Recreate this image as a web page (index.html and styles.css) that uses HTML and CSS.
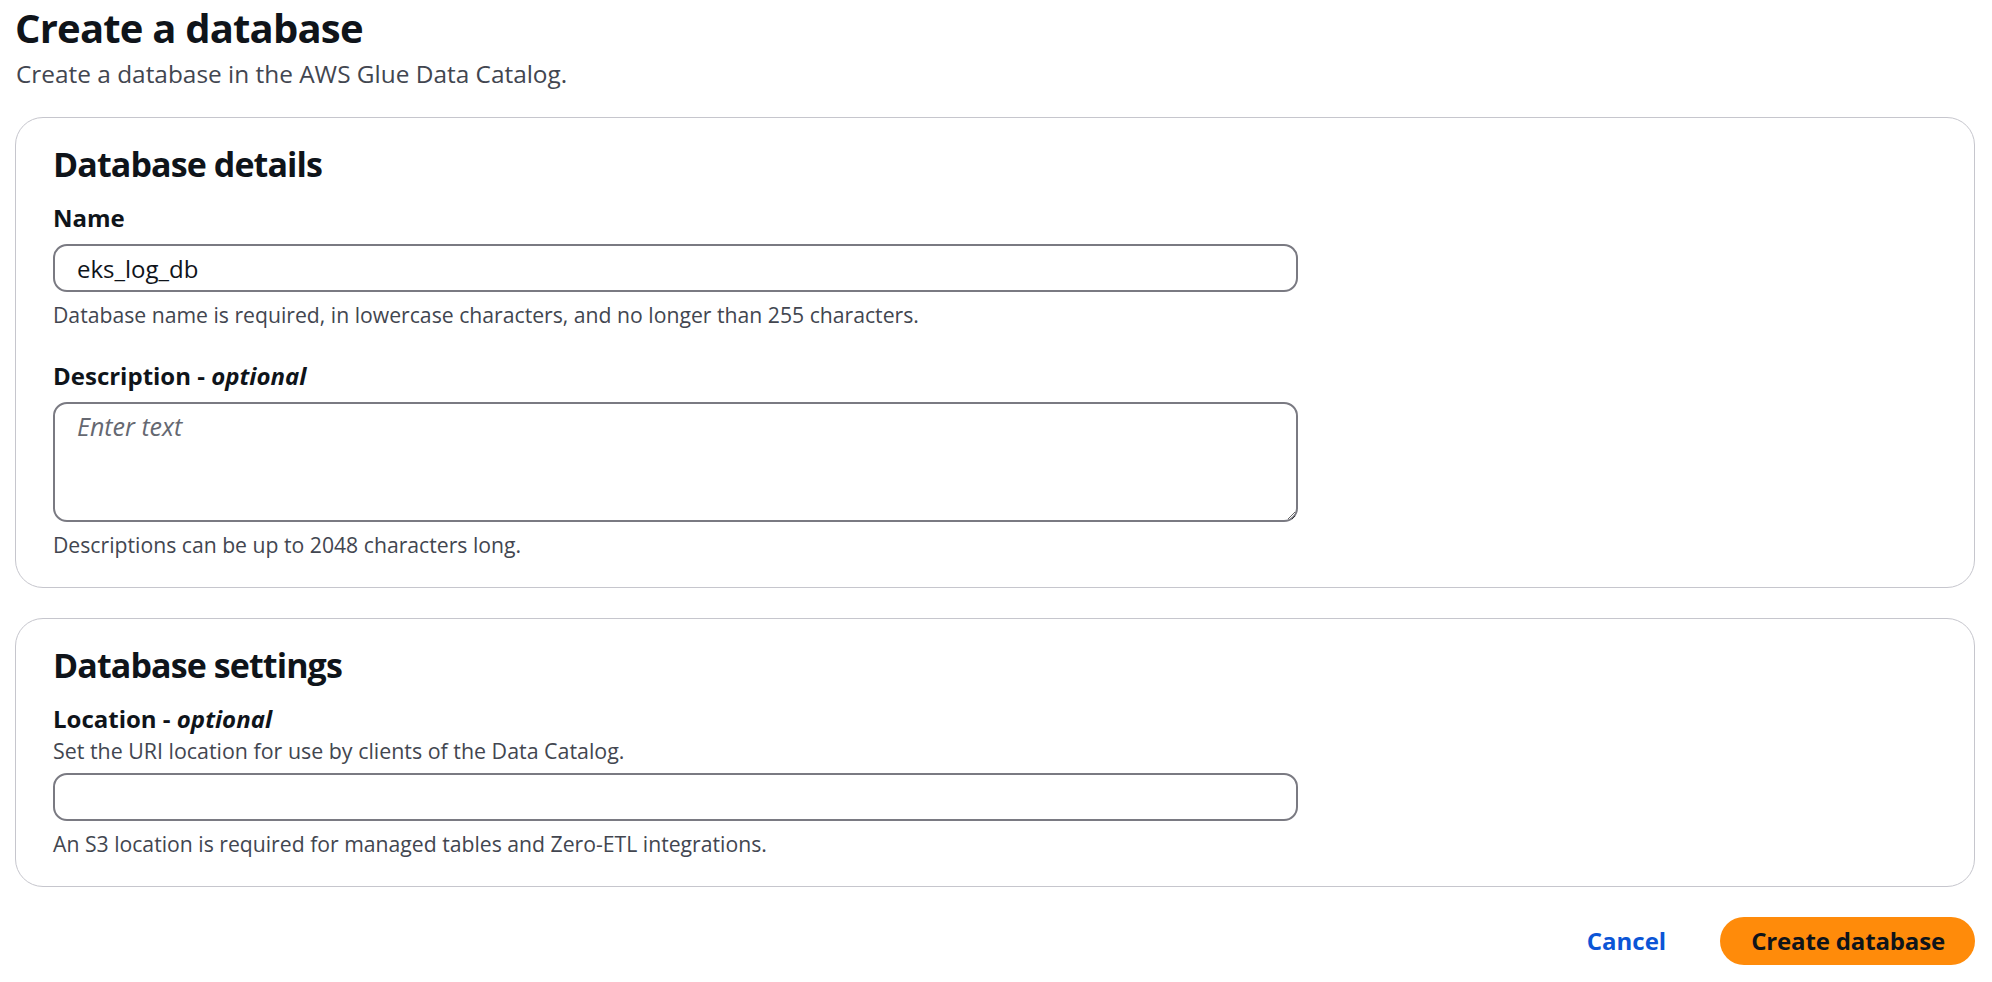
FILE: index.html
```html
<!DOCTYPE html>
<html lang="en">
<head>
<meta charset="utf-8">
<title>Create a database</title>
<link rel="stylesheet" href="styles.css">
</head>
<body>
<main class="page">
  <header class="page-header">
    <h1 class="page-title">Create a database</h1>
    <p class="page-desc">Create a database in the AWS Glue Data Catalog.</p>
  </header>

  <section class="card card-details">
    <h2 class="card-title">Database details</h2>
    <div class="field">
      <label class="field-label" for="db-name">Name</label>
      <input class="text-input" id="db-name" type="text" value="eks_log_db">
      <p class="field-hint">Database name is required, in lowercase characters, and no longer than 255 characters.</p>
    </div>
    <div class="field field-spaced">
      <label class="field-label" for="db-desc">Description - <i>optional</i></label>
      <textarea class="text-area" id="db-desc" placeholder="Enter text"></textarea>
      <p class="field-hint">Descriptions can be up to 2048 characters long.</p>
    </div>
  </section>

  <section class="card card-settings">
    <h2 class="card-title">Database settings</h2>
    <div class="field">
      <label class="field-label" for="db-loc">Location - <i>optional</i></label>
      <p class="field-desc">Set the URI location for use by clients of the Data Catalog.</p>
      <input class="text-input" id="db-loc" type="text" value="">
      <p class="field-hint">An S3 location is required for managed tables and Zero-ETL integrations.</p>
    </div>
  </section>

  <div class="actions">
    <button class="btn-link" type="button">Cancel</button>
    <button class="btn-primary" type="button">Create database</button>
  </div>
</main>
</body>
</html>
```

FILE: styles.css
```css
* {
  box-sizing: border-box;
}

html, body {
  margin: 0;
  padding: 0;
  background: #ffffff;
}

body {
  font-family: "Open Sans", "Noto Sans", "Liberation Sans", sans-serif;
  color: #0f141a;
}

.page {
  display: flex;
  flex-direction: column;
  padding: 3px 17px 0 15px;
}

.page-header {
  display: flex;
  flex-direction: column;
}

.page-title {
  margin: 0;
  font-size: 40px;
  line-height: 50px;
  font-weight: 700;
  letter-spacing: -0.8px;
  color: #0f141a;
}

.page-desc {
  margin: 6px 0 0 1px;
  font-size: 24.4px;
  line-height: 30px;
  color: #424650;
}

.card {
  margin-top: 28px;
  border: 1px solid #c6c6cd;
  border-radius: 28px;
  padding: 25px 37px 28px 37px;
  display: flex;
  flex-direction: column;
}

.card + .card {
  margin-top: 30px;
}

.card-title {
  margin: 0;
  font-size: 34px;
  line-height: 42px;
  font-weight: 700;
  letter-spacing: -0.9px;
  color: #0f141a;
}

.field {
  display: flex;
  flex-direction: column;
  margin-top: 18px;
}

.field-spaced {
  margin-top: 32px;
}

.field-label {
  font-size: 24px;
  line-height: 30px;
  font-weight: 700;
  color: #0f141a;
}

.field-label i {
  font-weight: 700;
  font-style: italic;
}

.field-desc {
  margin: 3px 0 0 0;
  font-size: 21.4px;
  line-height: 28px;
  color: #424650;
}

.text-input,
.text-area {
  display: block;
  width: 1245px;
  margin-top: 11px;
  border: 2px solid #7a7a82;
  border-radius: 14px;
  background: #ffffff;
  font-family: "Open Sans", "Noto Sans", "Liberation Sans", sans-serif;
  font-size: 24px;
  line-height: 30px;
  color: #0f141a;
  padding: 7px 22px;
  outline: none;
}

.text-input {
  height: 48px;
}

.field-desc + .text-input {
  margin-top: 8px;
}

.text-area {
  height: 120px;
  resize: vertical;
}

.text-area::placeholder {
  color: #656871;
  font-style: italic;
  font-size: 25px;
  opacity: 1;
}

.field-hint {
  margin: 9px 0 0 0;
  font-size: 21.2px;
  line-height: 28px;
  color: #424650;
}

.actions {
  margin-top: 30px;
  display: flex;
  justify-content: flex-end;
  align-items: center;
  gap: 30px;
}

.btn-link {
  border: none;
  background: transparent;
  font-family: "Open Sans", "Noto Sans", "Liberation Sans", sans-serif;
  font-size: 24px;
  line-height: 30px;
  font-weight: 700;
  color: #0b55d6;
  padding: 9px 24px;
  cursor: pointer;
}

.btn-primary {
  height: 48px;
  border: none;
  border-radius: 24px;
  background: #ff8b0a;
  font-family: "Open Sans", "Noto Sans", "Liberation Sans", sans-serif;
  font-size: 24px;
  line-height: 30px;
  font-weight: 700;
  letter-spacing: -0.15px;
  color: #0f141a;
  padding: 0 30px 0 31px;
  cursor: pointer;
}
```
